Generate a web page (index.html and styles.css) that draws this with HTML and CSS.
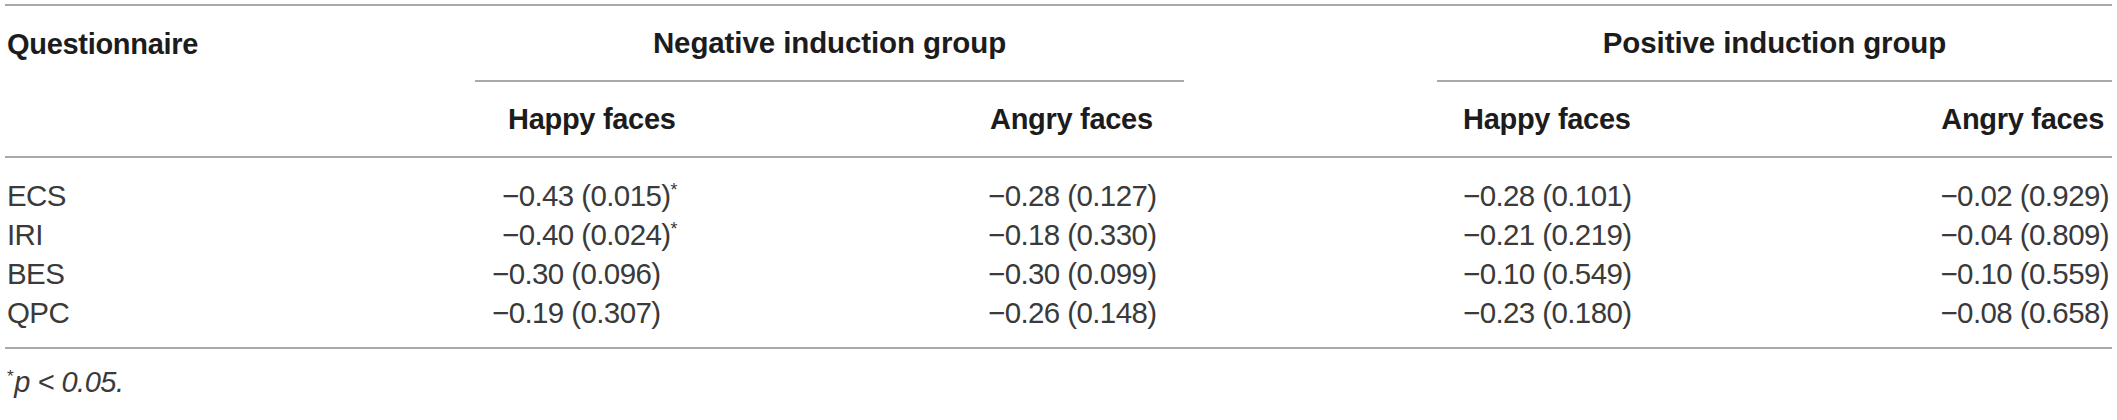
FILE: index.html
```html
<!DOCTYPE html>
<html>
<head>
<meta charset="utf-8">
<link rel="stylesheet" href="styles.css">
</head>
<body>
<table class="tbl">
  <colgroup>
    <col class="c-q"><col class="c-nh"><col class="c-na"><col class="c-gap"><col class="c-ph"><col class="c-pa">
  </colgroup>
  <thead>
    <tr class="h1">
      <th class="q">Questionnaire</th>
      <th class="grp" colspan="2">Negative induction group</th>
      <th class="gap"></th>
      <th class="grp" colspan="2">Positive induction group</th>
    </tr>
    <tr class="h2">
      <th></th>
      <th class="nh">Happy faces</th>
      <th class="na">Angry faces</th>
      <th></th>
      <th class="ph">Happy faces</th>
      <th class="pa">Angry faces</th>
    </tr>
  </thead>
  <tbody>
    <tr class="first">
      <td class="q">ECS</td>
      <td class="nh st">&minus;0.43 (0.015)<sup>*</sup></td>
      <td class="na">&minus;0.28 (0.127)</td>
      <td></td>
      <td class="ph">&minus;0.28 (0.101)</td>
      <td class="pa">&minus;0.02 (0.929)</td>
    </tr>
    <tr>
      <td class="q">IRI</td>
      <td class="nh st">&minus;0.40 (0.024)<sup>*</sup></td>
      <td class="na">&minus;0.18 (0.330)</td>
      <td></td>
      <td class="ph">&minus;0.21 (0.219)</td>
      <td class="pa">&minus;0.04 (0.809)</td>
    </tr>
    <tr>
      <td class="q">BES</td>
      <td class="nh">&minus;0.30 (0.096)</td>
      <td class="na">&minus;0.30 (0.099)</td>
      <td></td>
      <td class="ph">&minus;0.10 (0.549)</td>
      <td class="pa">&minus;0.10 (0.559)</td>
    </tr>
    <tr class="last">
      <td class="q">QPC</td>
      <td class="nh">&minus;0.19 (0.307)</td>
      <td class="na">&minus;0.26 (0.148)</td>
      <td></td>
      <td class="ph">&minus;0.23 (0.180)</td>
      <td class="pa">&minus;0.08 (0.658)</td>
    </tr>
  </tbody>
</table>
<p class="foot"><sup>*</sup><i>p</i> <i>&lt; 0.05.</i></p>
</body>
</html>
```
FILE: styles.css
```css
html, body {
  margin: 0;
  padding: 0;
  background: #ffffff;
}
body {
  font-family: "Liberation Sans", Arial, sans-serif;
  color: #3a3a3a;
}
.tbl {
  margin: 4px 0 0 5px;
  width: 2107px;
  table-layout: fixed;
  border-collapse: collapse;
  font-size: 29.5px;
  letter-spacing: -0.6px;
}
.c-q { width: 470px; }
.c-nh { width: 355px; }
.c-na { width: 354px; }
.c-gap { width: 253px; }
.c-ph { width: 337px; }
.c-pa { width: 338px; }

thead tr.h1 th {
  border-top: 2px solid #a9a9a9;
}
th {
  font-weight: bold;
  font-size: 29px;
  letter-spacing: -0.3px;
  color: #1c1c1c;
  padding: 0;
  line-height: 74px;
  text-align: left;
  white-space: nowrap;
}
th.q { padding-left: 2px; }
th.grp {
  text-align: center;
  border-bottom: 2px solid #a9a9a9;
  font-size: 29.5px;
  letter-spacing: -0.1px;
}
tr.h2 th {
  border-bottom: 2px solid #a9a9a9;
}
td {
  padding: 0;
  line-height: 39px;
  white-space: nowrap;
  color: #3a3a3a;
}
td.q { padding-left: 2px; }
.nh { padding-left: 17px; }
th.nh { padding-left: 33px; }
td.nh.st { padding-left: 27px; }
.na { padding-left: 158px; }
th.na { padding-left: 160px; }
.ph { padding-left: 26px; }
.pa { text-align: right; padding-right: 3px; }
th.pa { text-align: right; padding-right: 8px; }

tr.first td { padding-top: 18px; }
tr.last td {
  padding-bottom: 15px;
  border-bottom: 2px solid #a9a9a9;
}
sup {
  font-size: 0.6em;
  line-height: 0;
  vertical-align: 0.55em;
}
.foot {
  margin: 0;
  padding: 13px 0 0 7px;
  font-size: 29px;
  letter-spacing: -0.5px;
  line-height: 40px;
  color: #3a3a3a;
}
.foot sup { margin-right: 1px; }
```
